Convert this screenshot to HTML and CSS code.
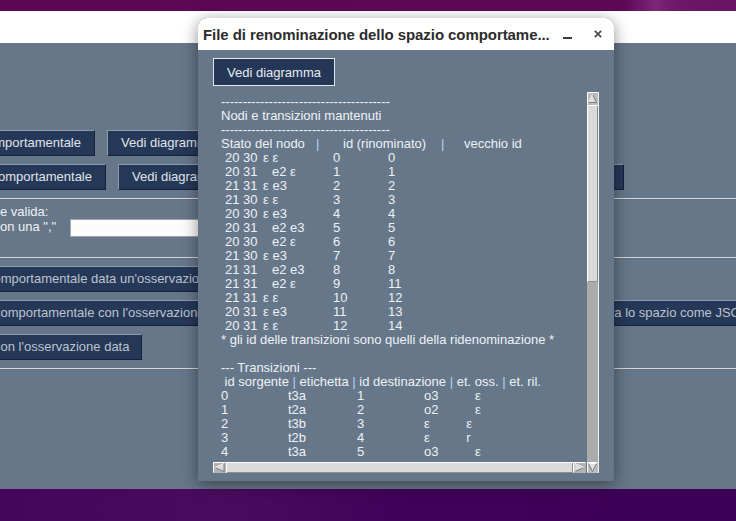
FILE: index.html
```html
<!DOCTYPE html>
<html lang="it">
<head>
<meta charset="utf-8">
<title>Spazio comportamentale</title>
<link rel="stylesheet" href="styles.css">
</head>
<body>
<div class="desktop">
  <div class="wall-top"></div>
  <div class="main-win">
    <div class="main-title"></div>
    <div class="main-body">
      <div class="row row-gap">
        <button class="btn btn-end w-295">Calcola spazio comportamentale</button>
        <button class="btn w-300">Vedi diagramma</button>
      </div>
      <div class="row row-gap row-next">
        <button class="btn btn-end w-306">Ridenomina spazio comportamentale</button>
        <button class="btn w-506">Vedi diagramma</button>
      </div>
      <div class="sep"></div>
      <div class="obs">
        <div class="obs-label">e valida:
on una ","</div>
        <div class="obs-input"></div>
      </div>
      <div class="sep sep-wide"></div>
      <div class="row row-first">
        <button class="btn btn-dim btn-cut w-590">comportamentale data un'osservazione</button>
      </div>
      <div class="row row-next">
        <button class="btn btn-dim btn-cut2 w-590">comportamentale con l'osservazione data</button>
        <button class="btn btn-dim btn-json w-200">Salva lo spazio come JSON</button>
      </div>
      <div class="row row-next">
        <button class="btn btn-dim btn-cut2 w-172">con l'osservazione data</button>
      </div>
      <div class="sep"></div>
    </div>
  </div>
  <div class="wall-bottom"></div>
</div>

<section class="dialog">
  <header class="dlg-title">
    <h1>File di renominazione dello spazio comportame...</h1>
    <svg class="ctl-min" width="9" height="16" viewBox="0 0 9 16"><rect x="0" y="11" width="9" height="2" fill="#3a3a3a"/></svg>
    <svg class="ctl-close" width="8" height="8" viewBox="0 0 8 8"><path d="M0.8 0.8L7.2 7.2M7.2 0.8L0.8 7.2" stroke="#4a4a4a" stroke-width="1.7" fill="none"/></svg>
  </header>
  <div class="dlg-body">
    <button class="dlg-btn">Vedi diagramma</button>
    <div class="ta">
      <div class="ta-view">
        <div class="ln">---------------------------------------</div>
        <div class="ln">Nodi e transizioni mantenuti</div>
        <div class="ln">---------------------------------------</div>
        <div class="ln"><span class="h1">Stato del nodo</span><span class="bar b1">|</span><span class="h3">id (rinominato)</span><span class="bar b2">|</span><span>vecchio id</span></div>
        <div class="ln nd"><span class="s">20 30</span><span class="l">ε ε</span><span class="i">0</span><span>0</span></div>
        <div class="ln nd"><span class="s">20 31</span><span class="l e2">e2 ε</span><span class="i">1</span><span>1</span></div>
        <div class="ln nd"><span class="s">21 31</span><span class="l">ε e3</span><span class="i">2</span><span>2</span></div>
        <div class="ln nd"><span class="s">21 30</span><span class="l">ε ε</span><span class="i">3</span><span>3</span></div>
        <div class="ln nd"><span class="s">20 30</span><span class="l">ε e3</span><span class="i">4</span><span>4</span></div>
        <div class="ln nd"><span class="s">20 31</span><span class="l e2">e2 e3</span><span class="i">5</span><span>5</span></div>
        <div class="ln nd"><span class="s">20 30</span><span class="l e2">e2 ε</span><span class="i">6</span><span>6</span></div>
        <div class="ln nd"><span class="s">21 30</span><span class="l">ε e3</span><span class="i">7</span><span>7</span></div>
        <div class="ln nd"><span class="s">21 31</span><span class="l e2">e2 e3</span><span class="i">8</span><span>8</span></div>
        <div class="ln nd"><span class="s">21 31</span><span class="l e2">e2 ε</span><span class="i">9</span><span>11</span></div>
        <div class="ln nd"><span class="s">21 31</span><span class="l">ε ε</span><span class="i">10</span><span>12</span></div>
        <div class="ln nd"><span class="s">20 31</span><span class="l">ε e3</span><span class="i">11</span><span>13</span></div>
        <div class="ln nd"><span class="s">20 31</span><span class="l">ε ε</span><span class="i">12</span><span>14</span></div>
        <div class="ln">* gli id delle transizioni sono quelli della ridenominazione *</div>
        <div class="ln"> </div>
        <div class="ln">--- Transizioni ---</div>
        <div class="ln"> id sorgente <span class="bar">|</span> etichetta <span class="bar">|</span> id destinazione <span class="bar">|</span> et. oss. <span class="bar">|</span> et. ril.</div>
        <div class="ln"><span class="c1">0</span><span class="c2">t3a</span><span class="c3">1</span><span>o3</span><span class="c5">ε</span></div>
        <div class="ln"><span class="c1">1</span><span class="c2">t2a</span><span class="c3">2</span><span>o2</span><span class="c5">ε</span></div>
        <div class="ln"><span class="c1">2</span><span class="c2">t3b</span><span class="c3">3</span><span>ε</span><span class="c5">ε</span></div>
        <div class="ln"><span class="c1">3</span><span class="c2">t2b</span><span class="c3">4</span><span>ε</span><span class="c5">r</span></div>
        <div class="ln"><span class="c1">4</span><span class="c2">t3a</span><span class="c3">5</span><span>o3</span><span class="c5">ε</span></div>
      </div>
      <div class="vbar">
        <svg class="arr" width="11" height="13" viewBox="0 0 11 13"><rect width="11" height="13" fill="#bcbcbc"/><path d="M.5 12.5V.5h10" fill="none" stroke="#fff"/><polygon points="5.5,2 9.5,10.5 1.5,10.5" fill="#e0e0e0" stroke="#7d7d7d"/><path d="M1.5 10.5L5.5 2" stroke="#fff" fill="none"/></svg>
        <div class="thumb v-thumb"></div>
        <div class="track"></div>
        <svg class="arr" width="11" height="11" viewBox="0 0 11 11"><rect width="11" height="11" fill="#bcbcbc"/><path d="M.5 10.5V.5h10" fill="none" stroke="#fff"/><polygon points="1.5,1.5 9.5,1.5 5.5,9.5" fill="#e0e0e0" stroke="#7d7d7d"/><path d="M1.5 1.5H9.5" stroke="#fff" fill="none"/></svg>
      </div>
      <div class="hbar">
        <svg class="arr" width="13" height="11" viewBox="0 0 13 11"><rect width="13" height="11" fill="#b2b2b2"/><path d="M.5 10.5V.5h12" fill="none" stroke="#fff"/><polygon points="2,5.5 11,1.5 11,9.5" fill="#dedede" stroke="#7d7d7d"/><path d="M2 5.5L11 1.5" stroke="#fff" fill="none"/></svg>
        <div class="thumb h-thumb"></div>
        <svg class="arr" width="13" height="11" viewBox="0 0 13 11"><rect width="13" height="11" fill="#b2b2b2"/><path d="M.5 10.5V.5h12" fill="none" stroke="#fff"/><polygon points="11,5.5 2,1.5 2,9.5" fill="#dedede" stroke="#7d7d7d"/><path d="M2 9.5V1.5L11 5.5" stroke="#fff" fill="none"/></svg>
      </div>
    </div>
  </div>
</section>
</body>
</html>
```

FILE: styles.css
```css
html, body {
  margin: 0;
  padding: 0;
}

body {
  width: 736px;
  height: 521px;
  overflow: hidden;
  position: relative;
  font-family: "Liberation Sans", Arial, sans-serif;
  font-size: 13px;
  background: #3d0056;
}

.desktop {
  display: flex;
  flex-direction: column;
  height: 521px;
}

.wall-top {
  flex: none;
  height: 11px;
  background: linear-gradient(90deg, #5a0755 0%, #5e0958 85%, #7b2878 89%, #6c1768 92%, #681465 100%);
}

.main-win {
  flex: none;
  height: 478px;
  display: flex;
  flex-direction: column;
}

.main-title {
  flex: none;
  height: 32px;
  background: #ffffff;
}

.main-body {
  flex: 1;
  background: #66778a;
  padding-top: 87px;
  display: flex;
  flex-direction: column;
  overflow: hidden;
}

.wall-bottom {
  flex: 1;
  background: linear-gradient(90deg, #44055a 0%, #4a0b5f 30%, #400259 55%, #3c0056 100%);
}

.row {
  display: flex;
  flex: none;
  height: 26px;
}

.row-gap {
  gap: 12px;
}

.row-next {
  margin-top: 8px;
}

.row-first {
  margin-top: 7px;
}

.btn {
  box-sizing: border-box;
  flex: none;
  height: 26px;
  margin: 0;
  padding: 0 13px;
  background: #263858;
  border: 1px solid;
  border-color: #8d9aac #15203a #15203a #8d9aac;
  color: #e0e5eb;
  font: 13px/24px "Liberation Sans", Arial, sans-serif;
  white-space: nowrap;
  overflow: hidden;
  text-align: left;
}

.btn-dim {
  color: #bcc4cf;
}

.btn-end {
  margin-left: -200px;
  text-align: right;
}

.btn-cut {
  margin-left: -30px;
  padding-left: 16px;
}

.btn-cut2 {
  margin-left: -30px;
  padding-left: 23px;
}

.btn-json {
  margin-left: 15px;
}

.w-295 { width: 295px; }
.w-300 { width: 300px; }
.w-306 { width: 306px; }
.w-506 { width: 506px; }
.w-590 { width: 590px; }
.w-200 { width: 200px; }
.w-172 { width: 172px; }

.sep {
  flex: none;
  height: 1px;
  margin-top: 8px;
  background: #d6d9dd;
  border-bottom: 1px solid #5f6f82;
}

.sep-wide {
  margin-top: 20px;
}

.obs {
  display: flex;
  flex: none;
  margin-top: 4px;
}

.obs-label {
  flex: none;
  width: 70px;
  line-height: 15px;
  color: #eef1f5;
  white-space: pre;
}

.obs-input {
  flex: none;
  box-sizing: border-box;
  margin-top: 15px;
  width: 420px;
  height: 18px;
  background: #fcfcfc;
  border: 1px solid #9ea7b2;
}

/* dialog window */
.dialog {
  position: absolute;
  left: 198px;
  top: 18px;
  width: 416px;
  height: 463px;
  display: flex;
  flex-direction: column;
  background: #66778a;
  border-radius: 9px 9px 0 0;
  box-shadow: 0 3px 16px rgba(0, 0, 0, 0.45);
}

.dlg-title {
  flex: none;
  height: 32px;
  display: flex;
  align-items: center;
  padding: 0 12px 0 5px;
  background: #ffffff;
  border-radius: 9px 9px 0 0;
}

.dlg-title h1 {
  flex: 1;
  margin: 0;
  font: bold 15px "Liberation Sans", Arial, sans-serif;
  letter-spacing: -0.07px;
  color: #2c2c2c;
  white-space: nowrap;
  overflow: hidden;
}

.ctl-min {
  flex: none;
  margin-right: 22px;
}

.ctl-close {
  flex: none;
}

.dlg-body {
  flex: 1;
  display: flex;
  flex-direction: column;
  padding: 8px 15px;
}

.dlg-btn {
  flex: none;
  box-sizing: border-box;
  width: 122px;
  height: 28px;
  margin: 0 0 6px;
  padding: 0;
  background: #253756;
  border: 1px solid #e3e6eb;
  color: #e8ecf1;
  font: 13px "Liberation Sans", Arial, sans-serif;
}

.ta {
  flex: none;
  width: 386px;
  height: 381px;
  display: grid;
  grid-template-columns: 373px 13px;
  grid-template-rows: 370px 11px;
}

.ta-view {
  grid-column: 1;
  grid-row: 1;
  overflow: hidden;
  padding: 3px 0 0 8px;
  color: #eef1f5;
  font-size: 13px;
  line-height: 14px;
}

.ln {
  height: 14px;
  white-space: pre;
}

.bar {
  color: #b9d3ee;
}

.h1 { display: inline-block; width: 95px; }
.b1 { display: inline-block; width: 27px; }
.h3 { display: inline-block; width: 98px; }
.b2 { display: inline-block; width: 23px; }

.nd { padding-left: 4px; }
.nd .s { display: inline-block; width: 38px; }
.nd .l { display: inline-block; width: 70px; box-sizing: border-box; }
.nd .l.e2 { padding-left: 9px; }
.nd .i { display: inline-block; width: 55px; }

.c1 { display: inline-block; width: 67px; }
.c2 { display: inline-block; width: 69px; }
.c3 { display: inline-block; width: 67px; }
.c5 { margin-left: 36.5px; }

.vbar {
  grid-column: 2;
  grid-row: 1 / 3;
  display: flex;
  flex-direction: column;
  margin-left: 1px;
  border-right: 1px solid #eef0f2;
}

.hbar {
  grid-column: 1;
  grid-row: 2;
  display: flex;
}

.arr {
  flex: none;
  display: block;
}

.thumb {
  background: #dadada;
  box-shadow: inset 1px 1px 0 #ffffff, inset -1px -1px 0 #8e8e8e;
}

.v-thumb {
  flex: none;
  height: 177px;
}

.h-thumb {
  flex: 1;
}

.track {
  flex: 1;
  background: #ababab;
}
```
